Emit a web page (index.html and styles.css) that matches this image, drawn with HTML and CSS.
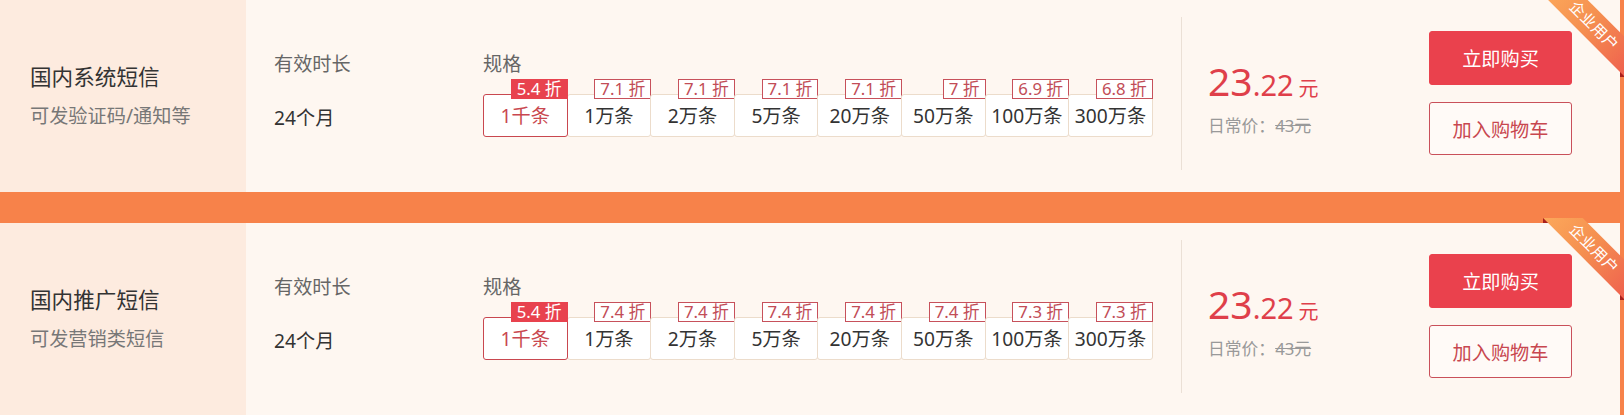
FILE: index.html
```html
<!DOCTYPE html>
<html lang="zh-CN">
<head>
<meta charset="utf-8">
<title>短信套餐</title>
<link rel="stylesheet" href="styles.css">
</head>
<body>
<div class="list">
  <div class="card">
    <div class="intro">
      <div class="title">国内系统短信</div>
      <div class="desc">可发验证码/通知等</div>
    </div>
    <div class="col duration">
      <div class="label">有效时长</div>
      <div class="value">24个月</div>
    </div>
    <div class="col spec">
      <div class="label">规格</div>
      <div class="opts">
        <div class="opt active">1千条<span class="tag">5.4 折</span></div>
        <div class="opt">1万条<span class="tag">7.1 折</span></div>
        <div class="opt">2万条<span class="tag">7.1 折</span></div>
        <div class="opt">5万条<span class="tag">7.1 折</span></div>
        <div class="opt">20万条<span class="tag">7.1 折</span></div>
        <div class="opt">50万条<span class="tag">7 折</span></div>
        <div class="opt">100万条<span class="tag">6.9 折</span></div>
        <div class="opt">300万条<span class="tag">6.8 折</span></div>
      </div>
    </div>
    <div class="divider"></div>
    <div class="price">
      <div class="now"><span class="int">23</span><span class="dec">.22</span><span class="unit">元</span></div>
      <div class="orig">日常价：<s>43元</s></div>
    </div>
    <div class="actions">
      <button class="btn buy">立即购买</button>
      <button class="btn cart">加入购物车</button>
    </div>
    <div class="ribbon"><span>企业用户</span></div>
  </div>

  <div class="card">
    <div class="intro">
      <div class="title">国内推广短信</div>
      <div class="desc">可发营销类短信</div>
    </div>
    <div class="col duration">
      <div class="label">有效时长</div>
      <div class="value">24个月</div>
    </div>
    <div class="col spec">
      <div class="label">规格</div>
      <div class="opts">
        <div class="opt active">1千条<span class="tag">5.4 折</span></div>
        <div class="opt">1万条<span class="tag">7.4 折</span></div>
        <div class="opt">2万条<span class="tag">7.4 折</span></div>
        <div class="opt">5万条<span class="tag">7.4 折</span></div>
        <div class="opt">20万条<span class="tag">7.4 折</span></div>
        <div class="opt">50万条<span class="tag">7.4 折</span></div>
        <div class="opt">100万条<span class="tag">7.3 折</span></div>
        <div class="opt">300万条<span class="tag">7.3 折</span></div>
      </div>
    </div>
    <div class="divider"></div>
    <div class="price">
      <div class="now"><span class="int">23</span><span class="dec">.22</span><span class="unit">元</span></div>
      <div class="orig">日常价：<s>43元</s></div>
    </div>
    <div class="actions">
      <button class="btn buy">立即购买</button>
      <button class="btn cart">加入购物车</button>
    </div>
    <div class="ribbon"><span>企业用户</span></div>
  </div>
</div>
</body>
</html>
```
FILE: styles.css
```css
* { box-sizing: border-box; }

html, body {
  margin: 0;
  padding: 0;
}

body {
  background: #f7824a;
  font-family: "Noto Sans", "Noto Sans CJK SC", sans-serif;
  color: #333;
  overflow: hidden;
}

.list {
  width: 1620px;
  display: flex;
  flex-direction: column;
  gap: 31px;
}

.card {
  position: relative;
  display: flex;
  height: 192px;
  background: #fef7f1;
}

.intro {
  width: 246px;
  flex: none;
  background: #fdebdf;
  padding: 62px 0 0 30px;
}

.title {
  font-size: 21.6px;
  line-height: 30px;
  color: #333;
}

.desc {
  margin-top: 10.5px;
  font-size: 19.2px;
  line-height: 26px;
  color: #777;
}

.col {
  flex: none;
  padding-top: 51px;
}

.label {
  font-size: 19.2px;
  line-height: 26px;
  color: #666;
}

.duration {
  width: 209px;
  margin-left: 28px;
}

.value {
  margin-top: 28px;
  font-size: 19.2px;
  line-height: 26px;
  color: #333;
}

.spec {
  width: 670px;
}

.opts {
  display: flex;
  margin-top: 17px;
}

.opt {
  position: relative;
  width: 84.6px;
  height: 43px;
  flex: none;
  background: #fff;
  border: 1px solid #ecdccb;
  border-radius: 3px;
  font-size: 19.2px;
  line-height: 41px;
  text-align: center;
  color: #333;
}

.opt + .opt {
  margin-left: -1px;
}

.opt.active {
  z-index: 1;
  border-color: #c9474f;
  color: #c9474f;
}

.tag {
  position: absolute;
  top: -16px;
  right: -1px;
  height: 20px;
  padding: 0 5px;
  background: #fff;
  border: 1px solid #c7515b;
  font-size: 16.8px;
  line-height: 18px;
  color: #c24d57;
  white-space: nowrap;
}

.opt.active .tag {
  background: #e8424e;
  border-color: #e8424e;
  color: #fff;
}

.divider {
  flex: none;
  width: 1px;
  height: 153px;
  margin: 17px 0 0 28px;
  background: #ebe0d6;
}

.price {
  flex: none;
  width: 247px;
  padding: 58px 0 0 26px;
}

.now {
  font-size: 39px;
  line-height: 46px;
  color: #df3f4a;
  white-space: nowrap;
}

.dec {
  font-size: 29px;
  line-height: 1;
}

.unit {
  margin-left: 5px;
  font-size: 20px;
  line-height: 1;
}

.orig {
  margin-top: 9.5px;
  font-size: 16.8px;
  line-height: 24px;
  color: #999;
}

.orig s {
  color: #999;
}

.actions {
  flex: none;
  width: 143px;
  padding-top: 31px;
  display: flex;
  flex-direction: column;
  gap: 17px;
}

.btn {
  display: block;
  width: 143px;
  height: 54px;
  border-radius: 3px;
  font-family: inherit;
  font-size: 19.2px;
  cursor: pointer;
}

.buy {
  background: #ea414d;
  border: 1px solid #ea414d;
  color: #fff;
}

.cart {
  height: 53px;
  background: #fffaf7;
  border: 1px solid #c9505a;
  color: #c8474f;
}

.ribbon {
  position: absolute;
  top: -5px;
  right: -5px;
  width: 82px;
  height: 82px;
  overflow: hidden;
  z-index: 2;
}

.ribbon::before,
.ribbon::after {
  content: "";
  position: absolute;
  width: 5px;
  height: 5px;
  background: #a9201c;
}

.ribbon::before {
  top: 0;
  left: 0;
}

.ribbon::after {
  right: 0;
  bottom: 0;
}

.ribbon span {
  position: absolute;
  z-index: 1;
  left: -14.25px;
  top: 17.45px;
  width: 130px;
  height: 27.6px;
  transform: rotate(45deg);
  background: linear-gradient(to right, #fdab5c, #f59050 45%, #ee5a4e);
  color: #fff;
  font-size: 15px;
  line-height: 27.6px;
  text-align: center;
  letter-spacing: 0.5px;
}
```
